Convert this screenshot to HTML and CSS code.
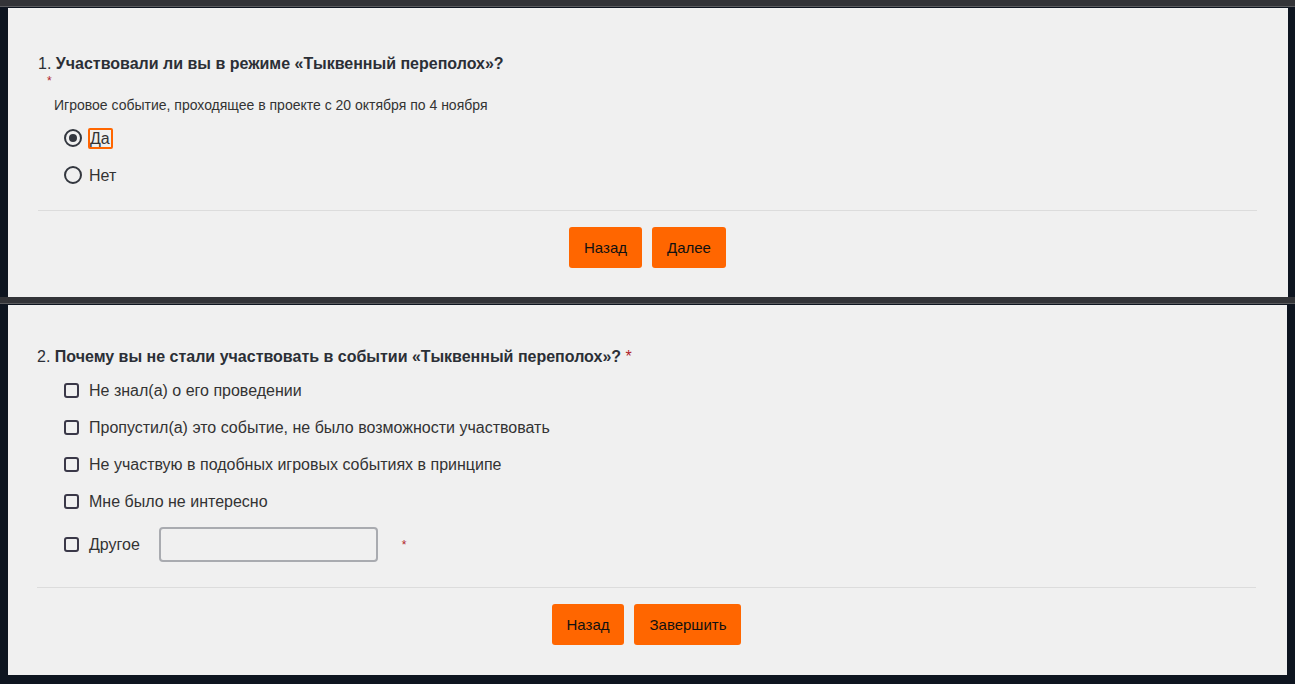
FILE: index.html
```html
<!DOCTYPE html>
<html lang="ru">
	<head>
		<meta charset="UTF-8">
		<meta name="viewport" content="width=device-width, initial-scale=1.0">
		<title>Опрос</title>
		<link rel="stylesheet" href="styles.css">
	</head>
	<body>
		<div class="top-strip"></div>

		<section class="survey-page page-one">
			<div class="question-title">
				<span class="num">1.</span> Участвовали ли вы в режиме «Тыквенный переполох»?
			</div>
			<div class="required-line"><span class="required">*</span></div>
			<div class="question-desc">Игровое событие, проходящее в проекте с 20 октября по 4 ноября</div>

			<div class="options">
				<label class="option">
					<input type="radio" name="q1" checked>
					<span class="option-text focused">Да</span>
				</label>
				<label class="option">
					<input type="radio" name="q1">
					<span class="option-text">Нет</span>
				</label>
			</div>

			<div class="page-footer">
				<button type="button">Назад</button>
				<button type="button">Далее</button>
			</div>
		</section>

		<div class="divider-strip"></div>

		<section class="survey-page page-two">
			<div class="question-title">
				<span class="num">2.</span> Почему вы не стали участвовать в событии «Тыквенный переполох»? <span class="required">*</span>
			</div>

			<div class="options checks">
				<label class="option">
					<input type="checkbox">
					<span class="option-text">Не знал(а) о его проведении</span>
				</label>
				<label class="option">
					<input type="checkbox">
					<span class="option-text">Пропустил(а) это событие, не было возможности участвовать</span>
				</label>
				<label class="option">
					<input type="checkbox">
					<span class="option-text">Не участвую в подобных игровых событиях в принципе</span>
				</label>
				<label class="option">
					<input type="checkbox">
					<span class="option-text">Мне было не интересно</span>
				</label>
				<div class="option other">
					<input type="checkbox">
					<span class="option-text">Другое</span>
					<input type="text" class="other-input">
					<span class="required">*</span>
				</div>
			</div>

			<div class="page-footer">
				<button type="button">Назад</button>
				<button type="button">Завершить</button>
			</div>
		</section>
	</body>
</html>
```

FILE: styles.css
```css
body {
    margin: 0;
    background-color: #0e1520;
    font-family: "Liberation Sans", Arial, sans-serif;
    color: #333333;
    height: 684px;
    overflow: hidden;
}

.top-strip {
    height: 6px;
    background-color: #333438;
    border-bottom: 1px solid #5a5b5e;
    margin-bottom: 1px;
}

.divider-strip {
    height: 6px;
    background-color: #333438;
    border-bottom: 1px solid #5a5b5e;
    margin-bottom: 1px;
}

.survey-page {
    background-color: #f0f0f0;
    margin-left: 8px;
    width: 1280px;
    box-sizing: border-box;
    padding: 0 31px 0 30px;
}

.page-one {
    height: 289px;
    padding-top: 47px;
}

.page-two {
    height: 370px;
    padding-top: 43px;
    width: 1279px;
    padding-left: 29px;
}

.question-title {
    font-size: 16px;
    font-weight: bold;
    line-height: 18px;
    color: #2b2f36;
}

.question-title .num {
    font-weight: normal;
}

.required {
    color: #b0232a;
    font-weight: normal;
    font-size: 14px;
}

.question-title .required {
    font-size: 16px;
}

.required-line {
    padding-left: 9px;
    line-height: 12px;
    height: 14px;
    margin-top: 1px;
}

.required-line .required {
    font-size: 12px;
}

.question-desc {
    font-size: 14px;
    line-height: 16px;
    padding-left: 16px;
    margin-top: 9px;
}

.options {
    display: flex;
    flex-direction: column;
    gap: 15px;
    padding-left: 26px;
    margin-top: 14px;
}

.page-two .options {
    margin-top: 13px;
    padding-left: 27px;
}

.option {
    display: flex;
    align-items: center;
    height: 22px;
    font-size: 16px;
}

.option input[type="radio"] {
    appearance: none;
    margin: 0 5px 0 0;
    width: 18px;
    height: 18px;
    border: 2px solid #33373f;
    border-radius: 50%;
    box-sizing: border-box;
    display: grid;
    place-content: center;
}

.option input[type="radio"]:checked::before {
    content: "";
    width: 8px;
    height: 8px;
    border-radius: 50%;
    background-color: #33373f;
}

.option input[type="checkbox"] {
    appearance: none;
    margin: 0 8px 0 0;
    width: 15px;
    height: 15px;
    border: 2px solid #3a3848;
    border-radius: 3px;
    box-sizing: border-box;
}

.option-text {
    border: 2px solid transparent;
    border-radius: 2px;
    padding: 0 1px 0 0;
    line-height: 17px;
}

.option-text.focused {
    border-color: #ff6600;
    margin-left: 1px;
}

.other {
    height: 35px;
    margin-top: 0;
}

.other-input {
    margin-left: 16px;
    width: 219px;
    height: 35px;
    box-sizing: border-box;
    border: 2px solid #a9abb0;
    border-radius: 4px;
    background-color: #f0f0f0;
}

.other .required {
    margin-left: 24px;
    font-size: 12px;
}

.page-footer {
    border-top: 1px solid #dcdcdc;
    display: flex;
    justify-content: center;
    gap: 10px;
    padding-top: 16px;
}

.page-one .page-footer {
    margin-top: 24px;
}

.page-two .page-footer {
    margin-top: 25px;
}

button {
    background-color: #ff6600;
    color: #111111;
    border: none;
    border-radius: 3px;
    height: 41px;
    padding: 0 15px;
    font-family: inherit;
    font-size: 15px;
    cursor: pointer;
}
```
